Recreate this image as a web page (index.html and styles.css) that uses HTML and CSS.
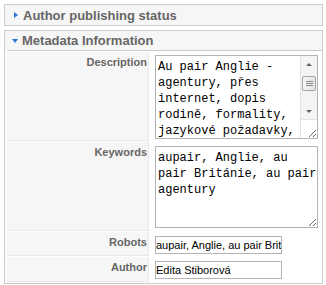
FILE: index.html
```html
<!DOCTYPE html>
<html lang="cs">
<head>
  <meta charset="UTF-8" />
  <title>Metadata Information</title>
  <link rel="stylesheet" href="styles.css">
</head>
<body>
  <div class="pane-sliders">
    <!-- collapsed panel -->
    <div class="panel">
      <h3 class="toggler closed"><span>Author publishing status</span></h3>
    </div>

    <!-- open panel -->
    <div class="panel">
      <h3 class="toggler open"><span>Metadata Information</span></h3>
      <div class="panel-content">
        <table class="paramlist">
          <tr>
            <td class="key">Description</td>
            <td class="value">
              <div class="area-wrap">
                <textarea class="text-area desc" name="metadesc">Au pair Anglie - agentury, přes internet, dopis rodině, formality, jazykové požadavky,</textarea>
                <div class="scrollbar">
                  <div class="sb-btn up"></div>
                  <div class="sb-track"><div class="sb-thumb"></div></div>
                  <div class="sb-btn down"></div>
                </div>
                <div class="sb-corner"></div>
              </div>
            </td>
          </tr>
          <tr>
            <td class="key">Keywords</td>
            <td class="value">
              <textarea class="text-area kw" name="metakey">aupair, Anglie, au pair Británie, au pair agentury</textarea>
            </td>
          </tr>
          <tr>
            <td class="key">Robots</td>
            <td class="value">
              <input class="text-input" type="text" name="robots" value="aupair, Anglie, au pair Británie, au pair agentury" />
            </td>
          </tr>
          <tr class="last">
            <td class="key">Author</td>
            <td class="value">
              <input class="text-input" type="text" name="author" value="Edita Stiborová" />
            </td>
          </tr>
        </table>
      </div>
    </div>
  </div>
</body>
</html>
```

FILE: styles.css
```css
:root {
  --panel-border: #cccccc;
  --panel-bg: #f6f6f6;
  --key-border: #e9e9e9;
  --text-grey: #666666;
  --arrow-blue: #2a76d6;
  --field-border: #b4b4b4;
}

* {
  box-sizing: border-box;
}

body {
  margin: 0;
  background: #ffffff;
  font-family: "Liberation Sans", Arial, sans-serif;
  font-size: 11px;
}

.pane-sliders {
  padding: 4px 3px 0 4px;
}

.panel {
  border: 1px solid var(--panel-border);
  margin-bottom: 4px;
  background: #ffffff;
}

.toggler {
  margin: 0;
  height: 20px;
  display: flex;
  align-items: center;
  background: var(--panel-bg);
  color: var(--text-grey);
  font-size: 13px;
  font-weight: bold;
}

.toggler::before {
  content: "";
  width: 0;
  height: 0;
}

.toggler.closed {
  padding-left: 9px;
}

.toggler.closed::before {
  border-left: 4px solid var(--arrow-blue);
  border-top: 3.5px solid transparent;
  border-bottom: 3.5px solid transparent;
  margin-right: 5px;
}

.toggler.open {
  padding-left: 7px;
  height: 19px;
}

.toggler.open::before {
  border-top: 4px solid var(--arrow-blue);
  border-left: 3.5px solid transparent;
  border-right: 3.5px solid transparent;
  margin-right: 4px;
  margin-top: 1px;
}

.panel-content {
  border-top: 1px solid var(--panel-border);
  margin-left: 2px;
}

.paramlist {
  width: calc(100% + 1px);
  margin-left: -1px;
  border-spacing: 1px;
}

.paramlist td {
  vertical-align: top;
}

.key {
  width: 142px;
  padding: 4px 1px 0 0;
  background: var(--panel-bg);
  border-bottom: 1px solid var(--key-border);
  border-right: 1px solid var(--key-border);
  color: var(--text-grey);
  font-weight: bold;
  text-align: right;
}

.value {
  padding: 3px 3px 2px 5px;
}

.area-wrap {
  position: relative;
  width: 163px;
}

.text-area {
  display: block;
  width: 163px;
  height: 84px;
  margin: 0;
  padding: 3px 0 2px 2px;
  border: 1px solid var(--field-border);
  font-family: "Liberation Mono", "Courier New", monospace;
  font-size: 12px;
  line-height: 16px;
  color: #000000;
  background: #ffffff;
}

.text-area.desc {
  overflow: hidden;
  padding-right: 17px;
}

.text-area.kw {
  height: 82px;
  margin: 1px 0 1px;
  overflow: hidden;
}

.text-input {
  display: block;
  width: 127px;
  height: 18px;
  margin: 1px 0 0;
  padding: 0;
  border: 1px solid var(--field-border);
  font-family: "Liberation Sans", Arial, sans-serif;
  font-size: 11px;
  color: #000000;
  background: #ffffff;
}

.last .value {
  padding-bottom: 3px;
}

/* fake scrollbar laid over the description box */
.scrollbar {
  position: absolute;
  top: 1px;
  right: 1px;
  bottom: 19px;
  width: 17px;
  display: flex;
  flex-direction: column;
  background: #f4f4f4;
  border-left: 1px solid #e4e4e4;
  pointer-events: none;
}

.sb-btn {
  height: 17px;
  display: flex;
  align-items: center;
  justify-content: center;
}

.sb-btn::before {
  content: "";
  width: 0;
  height: 0;
  border-left: 3px solid transparent;
  border-right: 3px solid transparent;
}

.sb-btn.up::before {
  border-bottom: 3px solid #606060;
}

.sb-btn.down::before {
  border-top: 3px solid #606060;
}

.sb-track {
  flex: 1;
  padding: 3px 1px 0 1px;
}

.sb-thumb {
  height: 15px;
  border: 1px solid #a4a4a4;
  border-radius: 2px;
  background: linear-gradient(to right, #f6f6f6, #e3e3e3);
  display: flex;
  align-items: center;
  justify-content: center;
}

.sb-thumb::before {
  content: "";
  width: 7px;
  height: 5px;
  background: repeating-linear-gradient(to bottom, #8c8c8c 0 1px, transparent 1px 2px);
}

.sb-corner {
  position: absolute;
  right: 1px;
  bottom: 1px;
  width: 17px;
  height: 19px;
  border-left: 1px solid #e4e4e4;
  border-top: 1px solid #e4e4e4;
  pointer-events: none;
}
```
